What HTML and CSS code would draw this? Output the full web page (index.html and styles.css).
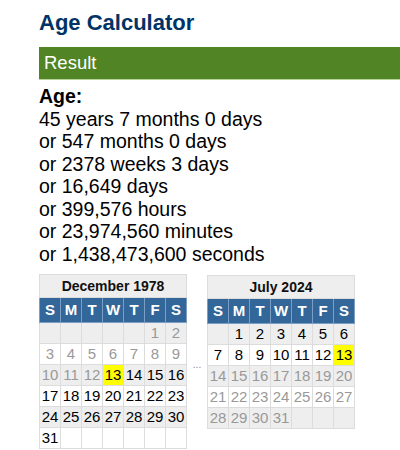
FILE: index.html
```html
<!DOCTYPE html>
<html>
<head>
<meta charset="utf-8">
<link rel="stylesheet" href="styles.css">
</head>
<body>
<div class="page">
  <h1 class="title">Age Calculator</h1>
  <h2 class="result-bar">Result</h2>
  <div class="age">
    <div class="age-label">Age:</div>
    <div>45 years 7 months 0 days</div>
    <div>or 547 months 0 days</div>
    <div>or 2378 weeks 3 days</div>
    <div>or 16,649 days</div>
    <div>or 399,576 hours</div>
    <div>or 23,974,560 minutes</div>
    <div>or 1,438,473,600 seconds</div>
  </div>
  <div class="cals">
    <table class="cal">
      <tr><td colspan="7" class="cal-title">December 1978</td></tr>
      <tr class="wk"><td>S</td><td>M</td><td>T</td><td>W</td><td>T</td><td>F</td><td>S</td></tr>
      <tr class="g"><td></td><td></td><td></td><td></td><td></td><td class="off">1</td><td class="off">2</td></tr>
      <tr class="w"><td class="off">3</td><td class="off">4</td><td class="off">5</td><td class="off">6</td><td class="off">7</td><td class="off">8</td><td class="off">9</td></tr>
      <tr class="g"><td class="off">10</td><td class="off">11</td><td class="off">12</td><td class="hl">13</td><td>14</td><td>15</td><td>16</td></tr>
      <tr class="w"><td>17</td><td>18</td><td>19</td><td>20</td><td>21</td><td>22</td><td>23</td></tr>
      <tr class="g"><td>24</td><td>25</td><td>26</td><td>27</td><td>28</td><td>29</td><td>30</td></tr>
      <tr class="w"><td>31</td><td></td><td></td><td></td><td></td><td></td><td></td></tr>
    </table>
    <div class="dots">...</div>
    <table class="cal cal-right">
      <tr><td colspan="7" class="cal-title">July 2024</td></tr>
      <tr class="wk"><td>S</td><td>M</td><td>T</td><td>W</td><td>T</td><td>F</td><td>S</td></tr>
      <tr class="g"><td></td><td>1</td><td>2</td><td>3</td><td>4</td><td>5</td><td>6</td></tr>
      <tr class="w"><td>7</td><td>8</td><td>9</td><td>10</td><td>11</td><td>12</td><td class="hl">13</td></tr>
      <tr class="g"><td class="off">14</td><td class="off">15</td><td class="off">16</td><td class="off">17</td><td class="off">18</td><td class="off">19</td><td class="off">20</td></tr>
      <tr class="w"><td class="off">21</td><td class="off">22</td><td class="off">23</td><td class="off">24</td><td class="off">25</td><td class="off">26</td><td class="off">27</td></tr>
      <tr class="g"><td class="off">28</td><td class="off">29</td><td class="off">30</td><td class="off">31</td><td></td><td></td><td></td></tr>
    </table>
  </div>
</div>
</body>
</html>
```

FILE: styles.css
```css
html, body {
  margin: 0;
  padding: 0;
  background: #fff;
}
body {
  font-family: "Liberation Sans", Arial, sans-serif;
  color: #000;
  overflow: hidden;
}
.page {
  padding: 10px 0 0 39px;
}
.title {
  margin: 0;
  font-size: 22px;
  line-height: 26px;
  font-weight: bold;
  color: #003366;
}
.result-bar {
  margin: 11px 0 0 0;
  height: 32px;
  line-height: 32px;
  padding-left: 5px;
  background: #518425;
  border-bottom: 1px solid #b9d39f;
  color: #fff;
  font-size: 18.5px;
  font-weight: normal;
}
.age {
  margin-top: 5px;
  font-size: 19.5px;
  line-height: 22.5px;
}
.age-label {
  font-weight: bold;
}
.cals {
  display: flex;
  align-items: flex-start;
  margin-top: 9px;
}
.dots {
  align-self: center;
  width: 20px;
  text-align: center;
  font-size: 10px;
  color: #888;
  padding-top: 6px;
}
.cal {
  border-collapse: collapse;
  font-size: 15px;
  table-layout: fixed;
}
.cal-right {
  margin-top: 1px;
}
.cal td {
  border: 1px solid #dcdcdc;
  width: 20px;
  height: 20px;
  padding: 0;
  text-align: center;
  line-height: 20px;
}
.cal .cal-title {
  height: 22px;
  line-height: 22px;
  background: #eee;
  font-weight: bold;
  font-size: 14px;
  color: #111;
}
.cal .wk td {
  height: 24px;
  line-height: 24px;
  background: #336699;
  color: #fff;
  font-weight: bold;
  border-color: #7d9ec4;
}
.cal .g td {
  background: #eee;
}
.cal .w td {
  background: #fff;
}
.cal td.off {
  color: #999;
}
.cal td.hl {
  background: #ffff00;
}
```
